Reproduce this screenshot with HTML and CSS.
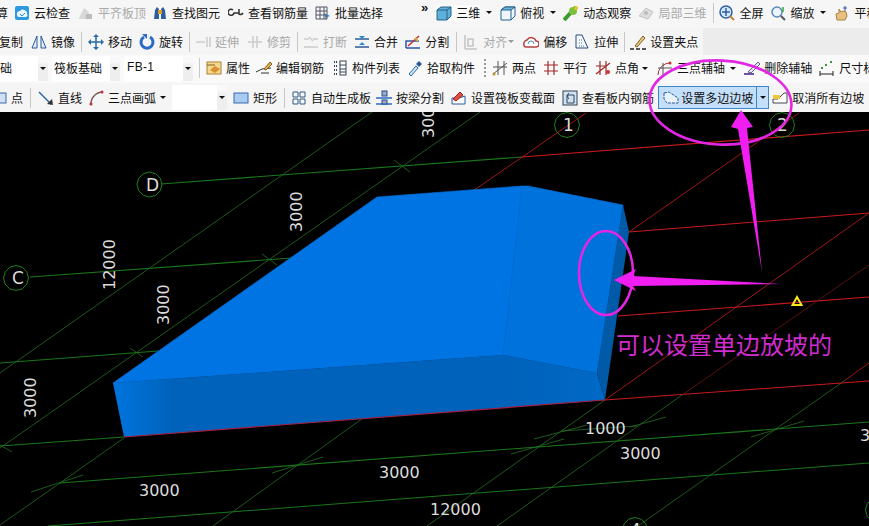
FILE: index.html
```html
<!DOCTYPE html>
<html lang="zh-CN">
<head>
<meta charset="utf-8">
<title>设置多边边坡</title>
<link rel="stylesheet" href="styles.css">
</head>
<body>
<div class="page">
<header class="toolbar">
  <div class="row r1">
    <span class="tool start-a">算</span>
    <span class="tool m6"><svg class="ic" viewBox="0 0 16 16"><rect x="1" y="1" width="14" height="14" rx="2" fill="#2d9ae0"/><path d="M3 10a3 3 0 0 1 3-4 4 4 0 0 1 7 3 2 2 0 0 1-1 3H5a2 2 0 0 1-2-2z" fill="#eaf6ff"/><path d="M6 9l2 2 3-3" stroke="#2d8ad0" fill="none"/></svg>云检查</span>
    <span class="tool m8 off"><svg class="ic" viewBox="0 0 16 16"><path d="M1 13l5-10 5 4v7H1z" fill="#d8d8d8"/><path d="M8 14V9h6v5z" fill="#bbb"/></svg>平齐板顶</span>
    <span class="tool m6"><svg class="ic" viewBox="0 0 16 16"><path d="M2 14l1-9 2-3 2 2v10H2zM9 14V4l2-2 2 3 1 9H9z" fill="#2f5f9f"/><rect x="6" y="5" width="4" height="4" fill="#d9a030"/></svg>查找图元</span>
    <span class="tool m8"><svg class="ic" viewBox="0 0 16 16"><path d="M5 5a3 3 0 1 0 1 3h5M11 4v5a3 3 0 0 0 4-1" stroke="#333" stroke-width="1.5" fill="none"/></svg>查看钢筋量</span>
    <span class="tool m7"><svg class="ic" viewBox="0 0 16 16"><path d="M1 2h11v12H1zM1 6h11M1 10h11M5 2v12M9 2v12" stroke="#556" fill="none"/><path d="M9 8l6 3-3 1-1 3z" fill="#47a"/></svg>批量选择</span>
    <span class="chev">»</span>
    <span class="tool m8 lit"><svg class="ic" viewBox="0 0 16 16"><path d="M1 5l4-3h10v9l-4 4H1z" fill="#5fb0d8" stroke="#27618a"/><path d="M1 5h10v10M11 5l4-3" stroke="#27618a" fill="none"/></svg>三维</span>
    <span class="arrow m6"></span>
    <span class="tool m8"><svg class="ic" viewBox="0 0 16 16"><path d="M1 5l4-3h10v9l-4 4H1z" fill="#eef6fb" stroke="#27618a"/><path d="M5 2h10L11 5H1z" fill="#6cb6dc" stroke="#27618a"/><path d="M11 5v10" stroke="#27618a"/></svg>俯视</span>
    <span class="arrow m6"></span>
    <span class="tool m7"><svg class="ic" viewBox="0 0 16 16"><path d="M1 15L13 2" stroke="#3a9a30" stroke-width="4"/><circle cx="10" cy="6" r="4" fill="#7ec040"/><circle cx="13" cy="3" r="2" fill="#e8c030"/></svg>动态观察</span>
    <span class="tool m7 off"><svg class="ic" viewBox="0 0 16 16"><path d="M1 11L8 3l7 4-5 7z" fill="#ddd" stroke="#c4c4c4"/><circle cx="8" cy="8" r="2" fill="#bbb"/></svg>局部三维</span>
    <span class="sep m7"></span>
    <span class="tool m5"><svg class="ic" viewBox="0 0 16 16"><circle cx="7" cy="7" r="6" fill="#d8e8f8" stroke="#2a60a8" stroke-width="1.5"/><path d="M7 3v8M3 7h8" stroke="#2a60a8" stroke-width="1.5"/><path d="M11 11l4 4" stroke="#c08030" stroke-width="2"/></svg>全屏</span>
    <span class="tool m7"><svg class="ic" viewBox="0 0 16 16"><circle cx="7" cy="7" r="5" fill="#eef4fb" stroke="#5a8ab8" stroke-width="1.5"/><path d="M11 11l4 4" stroke="#555" stroke-width="2"/><path d="M13 2v5" stroke="#3a3" stroke-width="1.5"/></svg>缩放</span>
    <span class="arrow m6"></span>
    <span class="tool m8"><svg class="ic" viewBox="0 0 16 16"><path d="M3 15l-1-6 3-1V4l2 3 2-1 3 1 1 4-2 4z" fill="#e8c080" stroke="#a88040"/><path d="M11 1v5M9 3h4" stroke="#35a"/></svg>平移</span>
  </div>
  <div class="row r2">
    <span class="tool start-b">复制</span>
    <span class="tool m8"><svg class="ic" viewBox="0 0 16 16"><path d="M6 2L1 14h5zM10 2l5 12h-5z" fill="#e4eef8" stroke="#2a5a98"/></svg>镜像</span>
    <span class="sep m6"></span>
    <span class="tool m6"><svg class="ic" viewBox="0 0 16 16"><path d="M8 1v14M1 8h14" stroke="#2a6aa8" stroke-width="1.5"/><path d="M8 0l3 3H5zM8 16l3-3H5zM0 8l3-3v6zM16 8l-3-3v6z" fill="#2a6aa8"/></svg>移动</span>
    <span class="tool m7"><svg class="ic" viewBox="0 0 16 16"><path d="M5 3a6 6 0 1 0 6 0" stroke="#2a6ac8" stroke-width="3" fill="none"/><path d="M3 0h5v5z" fill="#2a6ac8"/></svg>旋转</span>
    <span class="sep m6"></span>
    <span class="tool m5 off"><svg class="ic" viewBox="0 0 16 16"><path d="M1 8h9M12 3v10M15 3v10" stroke="#ccc" stroke-width="1.5"/></svg>延伸</span>
    <span class="tool m8 off"><svg class="ic" viewBox="0 0 16 16"><path d="M1 8h14M6 2v12M10 2v12" stroke="#ccc" stroke-width="1.5"/></svg>修剪</span>
    <span class="sep m6"></span>
    <span class="tool m5 off"><svg class="ic" viewBox="0 0 16 16"><path d="M1 13h14M1 5h5M10 5h5M6 3l4 4" stroke="#ccc" stroke-width="1.5" fill="none"/></svg>打断</span>
    <span class="tool m7"><svg class="ic" viewBox="0 0 16 16"><path d="M1 13h14M1 5h14" stroke="#2a5a98" stroke-width="1.5"/><path d="M5 2l3 3 3-3M8 8l-3 3h6z" fill="#2a8ac8"/></svg>合并</span>
    <span class="tool m7"><svg class="ic" viewBox="0 0 16 16"><path d="M1 14h14M1 14V7h13" stroke="#2a5aa8" stroke-width="1.5" fill="none"/><path d="M3 12L14 2" stroke="#c03030" stroke-width="1.5"/><path d="M10 4l3 3" stroke="#d8b040" stroke-width="2"/></svg>分割</span>
    <span class="sep m7"></span>
    <span class="tool m6 off"><svg class="ic" viewBox="0 0 16 16"><path d="M2 1v14M2 15h12M5 5h5v7H5z" stroke="#c4c4c4" stroke-width="1.5" fill="none"/></svg>对齐</span>
    <span class="arrow m1 dim"></span>
    <span class="tool m9"><svg class="ic" viewBox="0 0 16 16"><path d="M1 11a4 4 0 0 1 3-5 5 5 0 0 1 9 1 3 3 0 0 1 0 6H3a2 2 0 0 1-2-2z" fill="#fff" stroke="#b84040" stroke-width="1.5"/><path d="M5 10a3 3 0 0 1 6 0" stroke="#4a90c0" fill="none"/></svg>偏移</span>
    <span class="tool m7"><svg class="ic" viewBox="0 0 16 16"><path d="M2 1h6l6 13H2z" fill="#f4f8fc" stroke="#2a4a78"/><path d="M5 6h3M5 9h4M5 12h6" stroke="#5a7a98" stroke-dasharray="1 1"/></svg>拉伸</span>
    <span class="sep m6"></span>
    <span class="tool m5"><svg class="ic" viewBox="0 0 16 16"><path d="M0 15h4M6 15h4M12 15h4" stroke="#222" stroke-width="1.5"/><path d="M5 12L13 2l2 2-8 9z" fill="#e8c880" stroke="#806020"/></svg>设置夹点</span>
  </div>
  <div class="row r3">
    <span class="combo start-c"><span class="field w43">础</span><span class="drop"></span></span>
    <span class="combo m4"><span class="field w58">筏板基础</span><span class="drop"></span></span>
    <span class="combo m4"><span class="field w59 latin">FB-1</span><span class="drop"></span></span>
    <span class="sep m6"></span>
    <span class="tool m6"><svg class="ic" viewBox="0 0 16 16"><rect x="1" y="2" width="14" height="12" fill="#f4d890" stroke="#b08030"/><path d="M4 10l5-4 5 3-5 4z" fill="#d89030"/><path d="M1 5h8" stroke="#806020"/></svg>属性</span>
    <span class="tool m6"><svg class="ic" viewBox="0 0 16 16"><path d="M0 12l6-3 9-1" stroke="#333" fill="none"/><path d="M5 13h8" stroke="#333"/><path d="M8 9l6-7 2 2-6 6z" fill="#e0b050" stroke="#806020"/></svg>编辑钢筋</span>
    <span class="tool m8"><svg class="ic" viewBox="0 0 16 16"><rect x="8" y="1" width="6" height="14" fill="#fff" stroke="#345"/><path d="M8 5h6M8 9h6M8 12h6" stroke="#345"/><path d="M2 2h3M2 6h3M2 10h3M2 14h3" stroke="#345" stroke-width="2" stroke-dasharray="1 1"/></svg>构件列表</span>
    <span class="tool m7"><svg class="ic" viewBox="0 0 16 16"><path d="M2 14l7-8 2 2-7 8z" fill="#cce6f8" stroke="#2a6aa8"/><path d="M9 4l3-3 3 3-3 3z" fill="#2a5a98"/></svg>拾取构件</span>
    <span class="grip"></span>
    <span class="tool m6"><svg class="ic" viewBox="0 0 16 16"><path d="M1 14L15 3M6 1v14M12 1v14M1 7h14" stroke="#555" fill="none"/><circle cx="2" cy="14" r="1.5" fill="#b89020"/></svg>两点</span>
    <span class="tool m7"><svg class="ic" viewBox="0 0 16 16"><path d="M1 5h14M1 11h14M5 1v14M11 1v14" stroke="#a02828" stroke-width="1.2"/></svg>平行</span>
    <span class="tool m8"><svg class="ic" viewBox="0 0 16 16"><path d="M1 14L15 3M5 1v14M11 1v14M1 6h10" stroke="#a02828" stroke-width="1.2" fill="none"/><circle cx="13" cy="12" r="2" fill="#d03030"/></svg>点角</span>
    <span class="arrow m3"></span>
    <span class="tool m9"><svg class="ic" viewBox="0 0 16 16"><path d="M1 15a12 12 0 0 1 12-12" stroke="#b03030" fill="none"/><path d="M6 3v12M1 8h14" stroke="#555"/><circle cx="13" cy="3" r="1.5" fill="#d03030"/></svg>三点辅轴</span>
    <span class="arrow m5"></span>
    <span class="tool m8"><svg class="ic" viewBox="0 0 16 16"><path d="M0 14h10" stroke="#7050a0" stroke-width="2"/><path d="M4 12L14 2l2 2L7 13z" fill="#e4e4f0" stroke="#606080"/></svg>删除辅轴</span>
    <span class="tool m7"><svg class="ic" viewBox="0 0 16 16"><path d="M1 14h13M1 11v5M14 11v5" stroke="#222"/><path d="M2 8h2M6 5h2M11 2h2" stroke="#3a9a30" stroke-width="2"/></svg>尺寸标注</span>
  </div>
  <div class="row r4">
    <span class="tool start-d"><svg class="ic" viewBox="0 0 16 16"><rect x="5" y="3" width="10" height="10" fill="#cfe0f4" stroke="#3a6aa8"/></svg>点</span>
    <span class="sep m7"></span>
    <span class="tool m7"><svg class="ic" viewBox="0 0 16 16"><path d="M1 2l12 12" stroke="#2a6aa8" stroke-width="1.5"/><path d="M15 15l-1-6-5 5z" fill="#333"/></svg>直线</span>
    <span class="tool m6"><svg class="ic" viewBox="0 0 16 16"><path d="M3 15A12 12 0 0 1 14 2" stroke="#7a5a5a" stroke-width="1.5" fill="none"/><circle cx="3" cy="14" r="1.5" fill="#c03030"/><circle cx="14" cy="2" r="1.5" fill="#c03030"/></svg>三点画弧</span>
    <span class="arrow m4"></span>
    <span class="combo m6"><span class="field w45"></span><span class="drop"></span></span>
    <span class="tool m6"><svg class="ic" viewBox="0 0 16 16"><rect x="1" y="3" width="14" height="10" fill="#a8ccf0" stroke="#3a6ab0"/></svg>矩形</span>
    <span class="sep m7"></span>
    <span class="tool m6"><svg class="ic" viewBox="0 0 16 16"><path d="M2 2h5v5H2zM9 2h5v5H9zM2 9h5v5H2zM9 9h5v5H9z" fill="#f4f8fc" stroke="#345a80"/></svg>自动生成板</span>
    <span class="tool m5"><svg class="ic" viewBox="0 0 16 16"><path d="M0 8h16M0 14h16" stroke="#2a6ac8" stroke-width="1.5"/><rect x="6" y="1" width="5" height="5" fill="#9ac" stroke="#2a4a88"/><rect x="6" y="10" width="5" height="4" fill="#9ac" stroke="#2a4a88"/></svg>按梁分割</span>
    <span class="tool m7"><svg class="ic" viewBox="0 0 16 16"><path d="M1 14V8h7l6-2v8z" fill="#fff" stroke="#2a5aa8"/><path d="M2 9l7-7 3 3-7 6z" fill="#e05040" stroke="#a02020"/></svg>设置筏板变截面</span>
    <span class="tool m7"><svg class="ic" viewBox="0 0 16 16"><rect x="1" y="1" width="14" height="14" fill="#cfe2f4" stroke="#345"/><path d="M5 5h7v8H5zM7 3a4 4 0 0 0 0 6" stroke="#345" fill="none"/></svg>查看板内钢筋</span>
    <div class="split m4">
      <span class="split-main"><svg class="ic" viewBox="0 0 16 16"><path d="M1 3l5-1 9 6v5H4L1 9z" fill="#e8f2fc" stroke="#2a5a98" stroke-dasharray="3 1"/></svg>设置多边边坡</span>
      <span class="split-drop"></span>
    </div>
    <span class="tool m3"><svg class="ic" viewBox="0 0 16 16"><path d="M1 9h5l6-6h3v10H1z" fill="#fff" stroke="#445"/><rect x="1" y="5" width="7" height="4" fill="#e8c840"/></svg>取消所有边坡</span>
  </div>
</header>

<svg class="viewport" viewBox="0 112 869 414">
  <defs>
    <linearGradient id="frontShade" gradientUnits="userSpaceOnUse" x1="116" y1="0" x2="605" y2="0">
      <stop offset="0" stop-color="#0074dc"/><stop offset=".12" stop-color="#0062ba"/><stop offset=".8" stop-color="#0062ba"/><stop offset="1" stop-color="#0069c6"/>
    </linearGradient>
    <polygon id="bubble" points="12.5,0 10.8,6.25 6.25,10.8 0,12.5 -6.25,10.8 -10.8,6.25 -12.5,0 -10.8,-6.25 -6.25,-10.8 0,-12.5 6.25,-10.8 10.8,-6.25"/>
  </defs>
  <g class="grid-h">
    <path d="M161 184L522 157"/><path d="M30 277L292 258"/><path d="M0 363L158 351"/><path d="M0 446L124 437"/>
    <path d="M60 483L869 422"/><path d="M48 526L869 463"/>
  </g>
  <g class="grid-d">
    <path d="M0 373L372 112"/><path d="M0 448L480 112"/><path d="M0 525L124 438"/><path d="M213 526L363 418"/>
    <path d="M427 526L605 400"/><path d="M497 526L682 395"/><path d="M638 526L844 381"/>
    <path d="M394 160L410 172"/><path d="M262 254L277 265"/><path d="M130 348L143 357"/><path d="M0 445L12 452"/>
    <path d="M31 492L83 475"/><path d="M272 473L323 457"/><path d="M511 454L564 439"/><path d="M534 439L587 425"/><path d="M630 427L666 417"/><path d="M751 437L804 421"/><path d="M561 431L637 426"/>
  </g>
  <g class="grid-r">
    <path d="M522 157L869 130"/><path d="M629 232L869 213"/><path d="M618 316L869 297"/><path d="M605 400L869 381"/>
    <path class="thin" d="M470 193L586 113"/><path class="thin" d="M629 232L799 113"/><path class="thin" d="M605 400L869 213"/><path class="thin" d="M844 381L869 363"/>
    <path class="thin dark" d="M682 395L869 265"/>
  </g>
  <polygon class="face-top-a" points="113,383 377,197 522,186 503,355"/>
  <polygon class="face-top-b" points="522,186 528,186 623,205 597,373 503,355"/>
  <polygon class="face-right" points="623,205 629,232 605,400 597,373"/>
  <polygon class="face-front" fill="url(#frontShade)" points="113,383 503,355 597,373 605,400 124,437"/>
  <path class="edge" d="M124 437L605 400"/>
  <g class="bubbles">
    <use href="#bubble" x="149.500" y="184.500"/><use href="#bubble" x="16" y="278"/><use href="#bubble" x="567" y="125"/><use href="#bubble" x="782" y="125"/><use href="#bubble" x="635" y="530"/><use href="#bubble" x="878" y="510"/>
  </g>
  <g class="labels">
    <text class="big" x="146" y="191">D</text><text class="big" x="12" y="284">C</text><text class="big" x="563" y="131">1</text><text class="big" x="777" y="131">2</text><text class="big" x="630" y="536">4</text>
    <text transform="translate(302 232) rotate(-90)">3000</text>
    <text transform="translate(115 290) rotate(-90)">12000</text>
    <text transform="translate(169 325) rotate(-90)">3000</text>
    <text transform="translate(36 418) rotate(-90)">3000</text>
    <text transform="translate(434 138) rotate(-90)">3000</text>
    <text x="139" y="496">3000</text><text x="379" y="478">3000</text><text x="585" y="434">1000</text><text x="620" y="459">3000</text><text x="430" y="515">12000</text><text x="860" y="441">3000</text>
  </g>
</svg>

<svg class="overlay" viewBox="0 0 869 526">
  <ellipse class="ring" cx="720.500" cy="102.500" rx="71" ry="42" transform="rotate(3 720 102)"/>
  <ellipse class="ring" cx="606" cy="273" rx="27" ry="42"/>
  <polygon class="mark" points="741,110 753,127 747,128 762,272 738,129 731,127"/>
  <polygon class="mark" points="614,280 636,269 633,276 781,284 633,286 636,291"/>
  <polygon class="warn" points="797,297 792.500,305 801.500,305"/>
  <text class="note" x="616" y="354">可以设置单边放坡的</text>
</svg>
</div>
</body>
</html>
```
FILE: styles.css
```css
* { box-sizing: border-box; }
html, body { margin: 0; padding: 0; background: #000; }
.page {
  position: relative;
  width: 869px;
  height: 526px;
  overflow: hidden;
  display: flex;
  flex-direction: column;
  font-family: "Noto Sans CJK SC", "Liberation Sans", sans-serif;
}
.toolbar {
  height: 112px;
  flex: none;
  background: #f3f3f3;
  color: #111;
  font-size: 12px;
  overflow: hidden;
}
.row { display: flex; align-items: center; white-space: nowrap; }
.r1 { height: 28px; padding-bottom: 3px; background: #f6f6f6; }
.r2 { height: 27px; background: linear-gradient(90deg, #f5f5f5 703px, #ececec 703px); }
.r3 { height: 28px; padding-bottom: 2px; background: #f9f9f9; }
.r4 { height: 29px; background: #f5f5f5; }

.tool { display: inline-flex; align-items: center; gap: 4px; flex: none; line-height: 16px; }
.tool.off { color: #a9a9a9; }
.tool.lit { background: #fbfbfb; }
.ic { width: 16px; height: 16px; flex: none; display: block; }

.start-a { margin-left: -4px; }
.start-b { margin-left: -1px; }
.start-c { margin-left: -5px; }
.start-d { margin-left: -9px; }
.m1 { margin-left: 1px; }
.m3 { margin-left: 3px; }
.m4 { margin-left: 4px; }
.m5 { margin-left: 5px; }
.m6 { margin-left: 6px; }
.m7 { margin-left: 7px; }
.m8 { margin-left: 8px; }
.m9 { margin-left: 9px; }

.chev { margin-left: 38px; width: 9px; font: 700 13px/10px "Liberation Sans", sans-serif; align-self: flex-start; padding-top: 1px; margin-top: 2px; }
.sep { width: 1px; height: 20px; background: #c8c8c8; flex: none; }
.grip { width: 2px; height: 18px; margin-left: 9px; flex: none; background: repeating-linear-gradient(#999 0 2px, transparent 2px 4px); }
.arrow { width: 6px; height: 3px; flex: none; border-left: 3px solid transparent; border-right: 3px solid transparent; border-top: 3px solid #111; }
.arrow.dim { border-top-color: #999; }

.combo { display: inline-flex; height: 25px; flex: none; }
.field { background: #fff; padding: 0 2px; line-height: 23px; display: block; }
.w43 { width: 43px; padding-left: 5px; }
.w58 { width: 58px; }
.w59 { width: 59px; padding-left: 3px; }
.w45 { width: 45px; }
.latin { font-family: "Liberation Sans", sans-serif; letter-spacing: .3px; }
.drop { width: 10px; background: linear-gradient(#f9f9f9 20%, #eeeeee 40%); display: flex; align-items: center; justify-content: center; }
.drop::after { content: ""; border-left: 3px solid transparent; border-right: 3px solid transparent; border-top: 3px solid #111; }

.split { display: flex; width: 111px; height: 23px; flex: none; background: #c4dffa; border: 1px solid #3d86cc; }
.split-main { width: 98px; display: flex; align-items: center; gap: 2px; padding-left: 4px; border-right: 1px solid #3d86cc; }
.split-drop { flex: 1; display: flex; align-items: center; justify-content: center; }
.split-drop::after { content: ""; border-left: 3px solid transparent; border-right: 3px solid transparent; border-top: 3px solid #111; }

.viewport { display: block; width: 869px; height: 414px; flex: none; background: #000; }
.viewport path { fill: none; }
.grid-h path { stroke: #1a761a; stroke-width: 1.1; }
.grid-d path { stroke: #246f24; stroke-width: .8; }
.grid-r path { stroke: #c81a1a; stroke-width: 1.1; }
.grid-r .thin { stroke-width: .8; }
.grid-r .dark { stroke: #701515; }
.face-top-a { fill: #0074e2; stroke: #0074e2; stroke-width: .6; }
.face-top-b { fill: #0072dc; stroke: #0072dc; stroke-width: .6; }
.face-front { stroke: none; }
.face-right { fill: #005aa8; }
.edge { stroke: #a52045; stroke-width: 1.2; }
.bubbles use { fill: none; stroke: #1f7f1f; stroke-width: 1; }
.labels text { fill: #dcdcdc; font: 16px "DejaVu Sans", sans-serif; }
.labels .big { font-size: 17px; }

.overlay { position: absolute; left: 0; top: 0; width: 869px; height: 526px; pointer-events: none; }
.ring { fill: none; stroke: #e326e3; stroke-width: 2.6; }
.mark { fill: #f01ef0; }
.warn { fill: none; stroke: #ffe81a; stroke-width: 2; }
.note { fill: #d02cd0; font: 24px "Noto Sans CJK SC", sans-serif; }
```
